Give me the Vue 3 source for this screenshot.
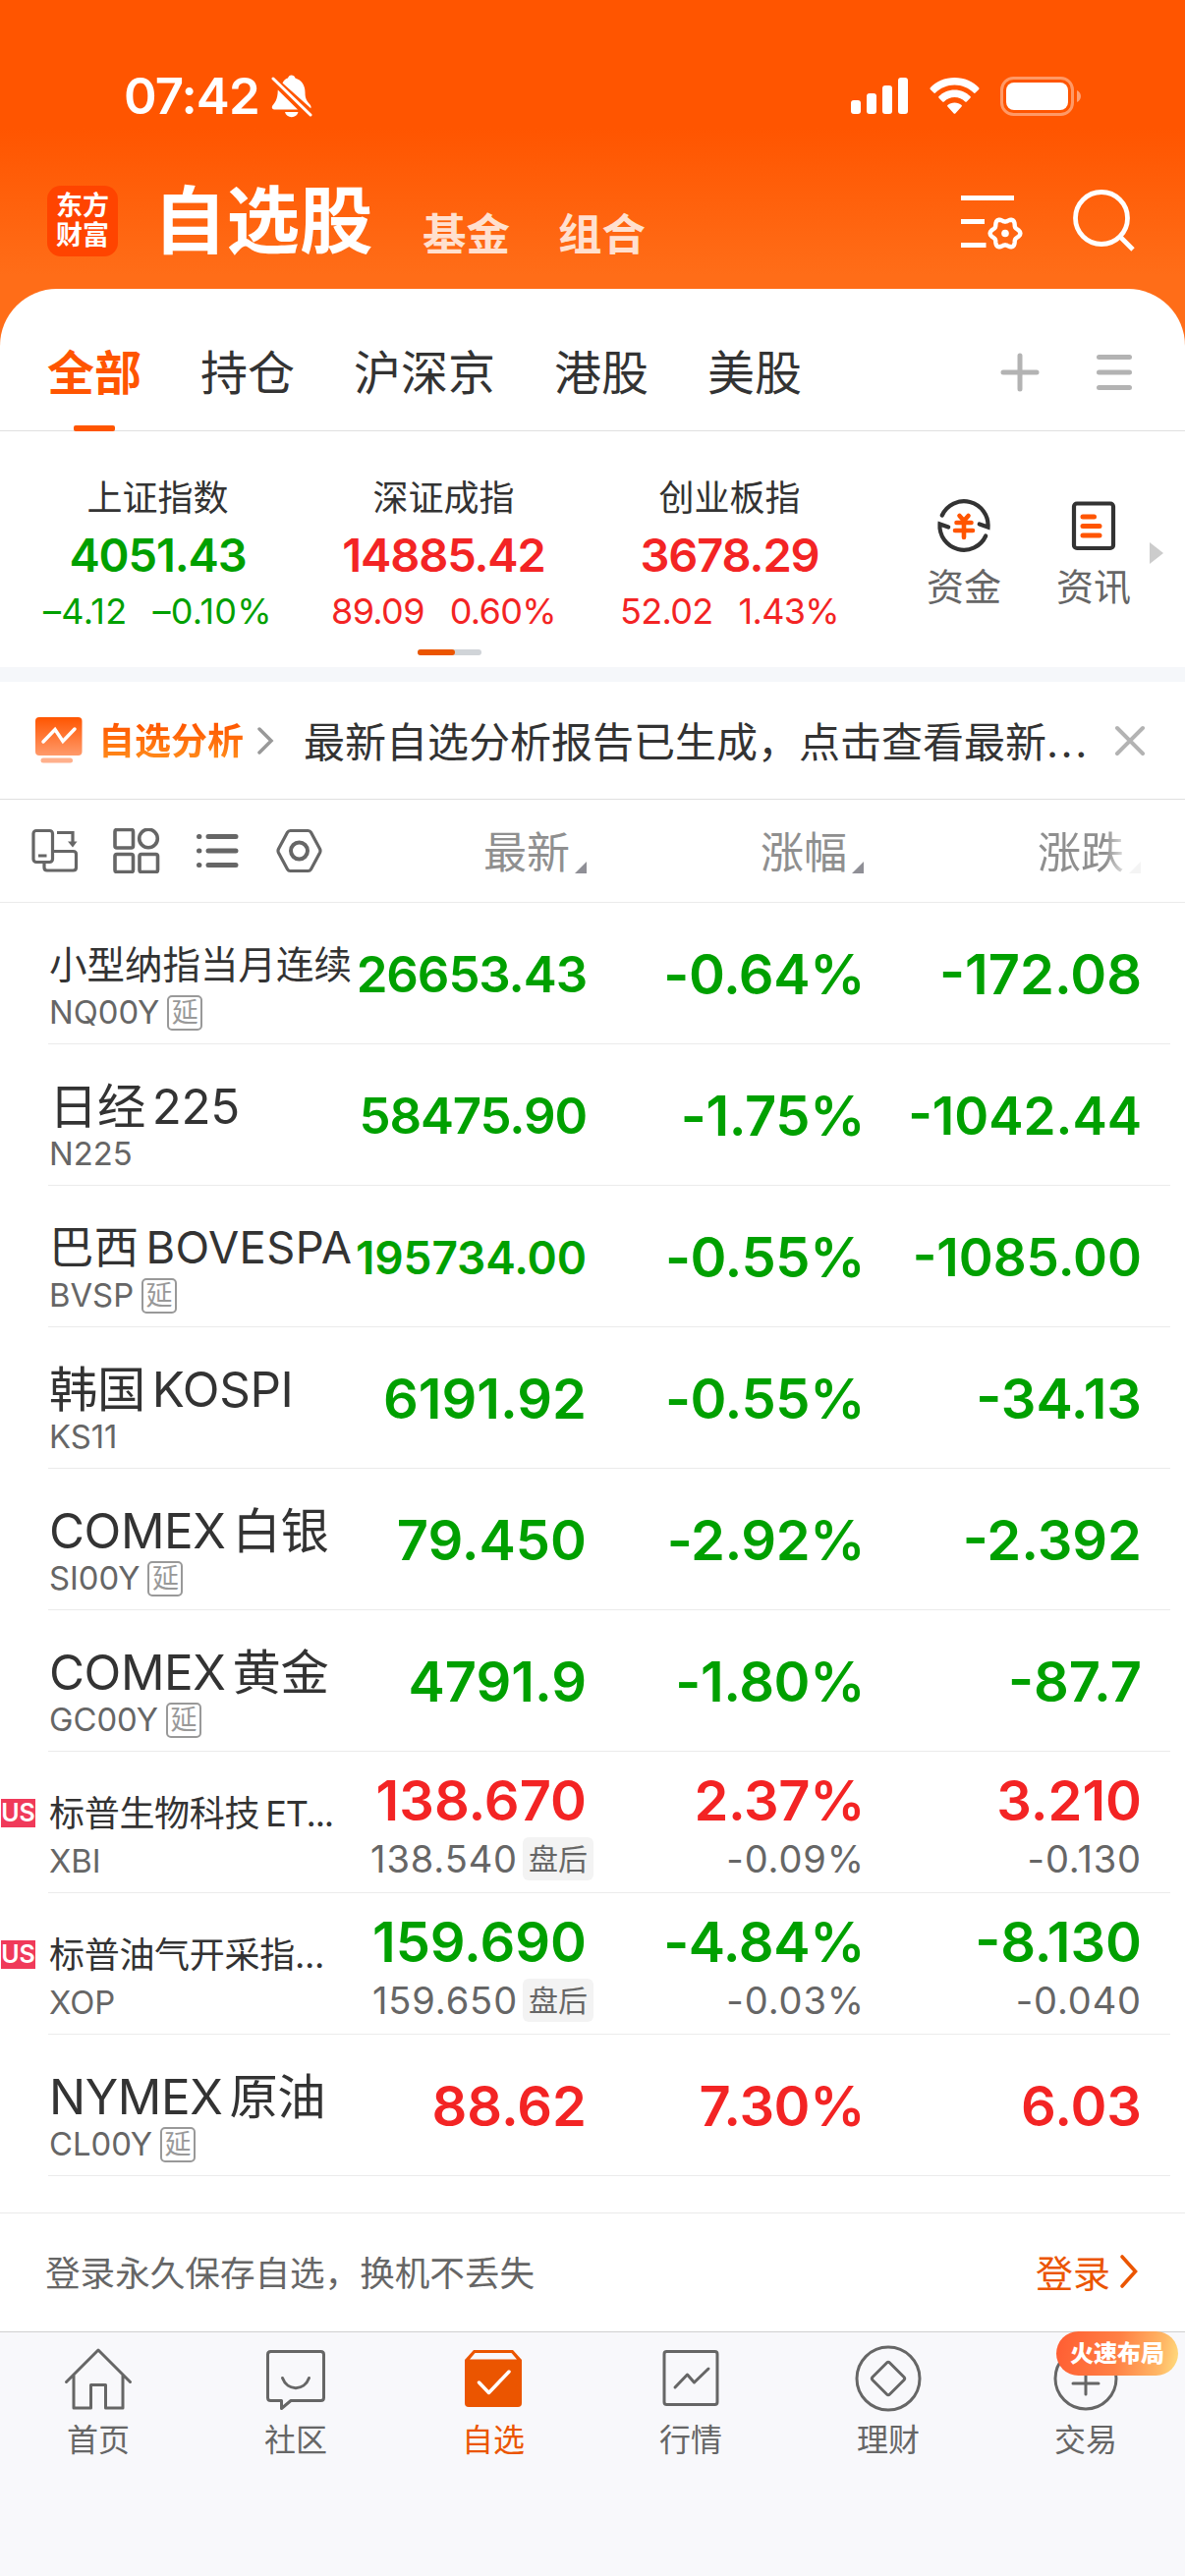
<template>
  <div class="app">
    <header class="header">
      <div class="status-bar">
        <span class="time">07:42</span>
        <svg class="bell" width="42" height="44" viewBox="0 0 42 44">
          <path fill="#fff" d="M11.5 8.5C13 5.500 15 4 17 3.600C17.500 1.600 19 .6 20.500 .6C22.500 .6 24 1.800 24.500 3.600C31 5.500 34.500 11 34.500 18C34.500 25 36.500 27 39.500 30.500C40.600 32 40.800 33 40.300 34.200Z" />
          <path fill="#fff" d="M6.800 15.500L27 35.400H3C.8 35.400 .2 33.500 1.300 31.600C3.500 28.500 6.500 26.500 6.800 15.500Z" />
          <path fill="#fff" d="M14 38h13.500c-.8 3.300-3.300 5.200-6.700 5.200S14.800 41.300 14 38Z" />
          <path stroke="#fff" stroke-width="3" stroke-linecap="round" d="M2 4L40 41" />
        </svg>
        <svg class="signal" width="58" height="38" viewBox="0 0 58 38" fill="#fff">
          <rect x="0" y="23" width="10" height="14" rx="3" />
          <rect x="16" y="16" width="10" height="21" rx="3" />
          <rect x="32" y="8" width="10" height="29" rx="3" />
          <rect x="48" y="0" width="10" height="37" rx="3" />
        </svg>
        <svg class="wifi" width="51" height="38" viewBox="0 0 51 38" fill="#fff">
          <path d="M25.500 0C35.500 0 44.500 3.900 50.200 10.300c.5.6.5 1.200 0 1.700l-3.600 3.600c-.5.5-1.100.5-1.600 0C40 10.500 33 7.500 25.500 7.500S11 10.500 6 15.600c-.5.5-1.100.5-1.600 0L.8 12c-.5-.5-.5-1.100 0-1.700C6.500 3.900 15.500 0 25.500 0Z" />
          <path d="M25.500 12.500c6.300 0 12 2.500 16 6.600.5.500.5 1.100 0 1.600l-3.700 3.700c-.5.5-1.100.5-1.600 0-2.800-2.700-6.500-4.300-10.700-4.300s-7.900 1.600-10.700 4.300c-.5.5-1.100.5-1.600 0L9.500 20.700c-.5-.5-.5-1.100 0-1.600 4-4.100 9.700-6.600 16-6.600Z" />
          <path d="M25.500 25.400c2.800 0 5.300 1 7.100 2.700.5.5.5 1 0 1.500l-6.300 6.800c-.5.5-1.100.5-1.600 0l-6.300-6.800c-.5-.5-.5-1 0-1.500 1.800-1.700 4.300-2.700 7.100-2.700Z" />
        </svg>
        <svg class="battery" width="82" height="40" viewBox="0 0 82 40">
          <rect x="1.500" y="1.500" width="72" height="37" rx="12" fill="none" stroke="#fff" stroke-opacity=".4" stroke-width="3" />
          <rect x="6" y="6" width="63" height="28" rx="8" fill="#fff" />
          <path d="M78 14c2.500 1 4 3.500 4 6s-1.500 5-4 6Z" fill="#fff" fill-opacity=".45" />
        </svg>
      </div>

      <div class="title-bar">
        <div class="logo"><span>东方</span><span>财富</span></div>
        <h1 class="title">自选股</h1>
        <span class="title-link">基金</span>
        <span class="title-link">组合</span>
        <svg class="manage" width="64" height="58" viewBox="0 0 64 58" fill="none" stroke="#fff">
          <path stroke-width="5" d="M0 5.500h54M0 29.500h24M0 53.500h25.500" />
          <path stroke-width="4.400" stroke-linejoin="round" :d="gearPath" />
          <circle cx="45" cy="41.500" r="3.800" fill="#fff" stroke="none" />
        </svg>
        <svg class="search" width="66" height="66" viewBox="0 0 66 66" fill="none" stroke="#fff" stroke-width="4.800">
          <circle cx="30" cy="30" r="26.500" />
          <path d="M48.500 48.500L62 62" />
        </svg>
      </div>
    </header>

    <main class="panel">
      <nav class="group-tabs">
        <span v-for="(tab, i) in groupTabs" :key="tab" class="group-tab" :class="{ active: i === 0 }">{{ tab }}</span>
        <svg class="plus" width="40" height="40" viewBox="0 0 40 40" stroke="#b3b3b3" stroke-width="5" stroke-linecap="round">
          <path d="M20 3v34M3 20h34" />
        </svg>
        <svg class="menu" width="38" height="38" viewBox="0 0 38 38" stroke="#b3b3b3" stroke-width="5" stroke-linecap="round">
          <path d="M3.500 3.500h31M3.500 19h31M3.500 34.500h31" />
        </svg>
      </nav>

      <section class="indices">
        <div v-for="item in indices" :key="item.name" class="index" :class="item.trend">
          <div class="index-name">{{ item.name }}</div>
          <div class="index-value">{{ item.value }}</div>
          <div class="index-change"><span>{{ item.change }}</span><span>{{ item.percent }}</span></div>
        </div>
        <div class="shortcut funds">
          <svg width="56" height="62" viewBox="0 0 56 62" fill="none">
            <g stroke="#333" stroke-width="4.200" stroke-linecap="round">
              <path d="M5.800 20.500A24.500 24.500 0 0 1 52.500 32.500L43.800 29.500" />
              <path d="M50.200 41.500A24.500 24.500 0 0 1 3.500 29.500L12.200 32.500" />
            </g>
            <path stroke="#ff5500" stroke-width="4.600" stroke-linecap="round" stroke-linejoin="round" d="M23.500 21l4.500 5 4.500-5M20.500 28h15M19 36h18M28 27v16" />
          </svg>
          <span>资金</span>
        </div>
        <div class="shortcut">
          <svg width="46" height="62" viewBox="0 0 46 62" fill="none">
            <rect x="3" y="8.500" width="40" height="45.500" rx="3" stroke="#333" stroke-width="4.200" />
            <path stroke="#ff5500" stroke-width="5" stroke-linecap="round" d="M12 22h11.500M12 31.500h17M12 41h17" />
          </svg>
          <span>资讯</span>
        </div>
        <i class="more-arrow"></i>
        <div class="pager"><i></i></div>
      </section>

      <section class="analysis">
        <svg class="analysis-icon" width="50" height="50" viewBox="0 0 50 50" fill="none">
          <defs>
            <linearGradient id="analysisFill" x1="0" y1="0" x2="0" y2="1">
              <stop offset="0" stop-color="#ff5500" />
              <stop offset="1" stop-color="#ff9a6b" />
            </linearGradient>
          </defs>
          <rect x="1" y="1" width="47.500" height="39" rx="4" fill="url(#analysisFill)" />
          <path d="M9 26l12-12.500 8 12L41 13" stroke="#fff" stroke-width="3.500" stroke-linecap="round" />
          <path d="M9 45h27.500" stroke="#ffb08c" stroke-width="5" stroke-linecap="round" />
        </svg>
        <span class="analysis-title">自选分析</span>
        <svg class="analysis-chevron" width="18" height="30" viewBox="0 0 18 30" fill="none" stroke="#999" stroke-width="3.500" stroke-linecap="round">
          <path d="M3 3l12 12L3 27" />
        </svg>
        <span class="analysis-text">最新自选分析报告已生成，点击查看最新<span class="dots">...</span></span>
        <svg class="close" width="32" height="32" viewBox="0 0 32 32" stroke="#b3b3b3" stroke-width="4" stroke-linecap="round">
          <path d="M3 3l26 26M29 3L3 29" />
        </svg>
      </section>

      <section class="table-head">
        <svg class="tool" width="48" height="46" viewBox="0 0 48 46" fill="none" stroke="#666" stroke-width="3.200">
          <rect x="2" y="2.500" width="19.500" height="32" rx="3" />
          <path d="M7 28h8.500M13 34.500v5.500q0 3 3 3h26.500q3 0 3-3V26.500q0-3-3-3H21.500M26 4.500h16v12" />
          <path d="M37 13.500h9.500L42 19.500z" fill="#666" stroke="none" />
        </svg>
        <svg class="tool" width="48" height="46" viewBox="0 0 48 46" fill="none" stroke="#666" stroke-width="3.600">
          <rect x="2" y="1.500" width="18.500" height="18.500" rx="2" />
          <circle cx="36" cy="10.500" r="9.300" />
          <rect x="2" y="26.500" width="18.500" height="18" rx="2" />
          <rect x="27" y="26.500" width="18.500" height="18" rx="2" />
        </svg>
        <svg class="tool" width="48" height="46" viewBox="0 0 48 46" fill="none" stroke="#666" stroke-width="5" stroke-linecap="round">
          <path d="M4.500 8.500h.4M4.500 23h.4M4.500 37.500h.4M14 8.500h28M14 23h28M14 37.500h28" />
        </svg>
        <svg class="tool" width="48" height="46" viewBox="0 0 48 46" fill="none" stroke="#666">
          <path stroke-width="3.200" stroke-linejoin="round" d="M14.500 2.500h18q2 0 3 1.800l9 16.700q1 2 0 4l-9 16.700q-1 1.800-3 1.800h-18q-2 0-3-1.800L2.500 25q-1-2 0-4l9-16.700q1-1.800 3-1.800z" />
          <circle cx="23.500" cy="23" r="8.500" stroke-width="4" />
        </svg>
        <div class="head-cell latest">最新<i></i></div>
        <div class="head-cell percent">涨幅<i></i></div>
        <div class="head-cell change">涨跌<i></i></div>
      </section>

      <ul class="stocks">
        <li v-for="stock in stocks" :key="stock.code" class="stock" :class="[stock.trend, { extended: stock.after }]">
          <div class="market"><span v-if="stock.market">{{ stock.market }}</span></div>
          <div class="info">
            <div class="name" :class="stock.size">
              <span v-for="part in stock.name" :key="part">{{ part }}</span>
            </div>
            <div class="code">{{ stock.code }}<span v-if="stock.delayed" class="delay">延</span></div>
          </div>
          <div class="quote latest">
            <div class="num" :class="stock.priceSize">{{ stock.price }}</div>
            <div v-if="stock.after" class="after">{{ stock.after.price }}<span class="session">盘后</span></div>
          </div>
          <div class="quote percent">
            <div class="num">{{ stock.percent }}</div>
            <div v-if="stock.after" class="after">{{ stock.after.percent }}</div>
          </div>
          <div class="quote change">
            <div class="num" :class="stock.changeSize">{{ stock.change }}</div>
            <div v-if="stock.after" class="after">{{ stock.after.change }}</div>
          </div>
        </li>
      </ul>

      <section class="login">
        <span>登录永久保存自选，换机不丢失</span>
        <a class="login-link">
          登录
          <svg width="20" height="36" viewBox="0 0 20 36" fill="none" stroke="#eb5500" stroke-width="3.600" stroke-linecap="round">
            <path d="M3 3l13.500 15L3 33" />
          </svg>
        </a>
      </section>
    </main>

    <footer class="tab-bar">
      <div class="tab">
        <svg width="70" height="70" viewBox="0 0 70 70">
          <path d="M2.500 36.500L35 4l32.500 32.500M10 29.500V63h17.500V39.500h15V63H60V29.500" />
        </svg>
        <span>首页</span>
      </div>
      <div class="tab">
        <svg width="70" height="70" viewBox="0 0 70 70">
          <path d="M9.500 5.500h51q3 0 3 3v44q0 3-3 3H30L20.500 63.500V55.500H9.500q-3 0-3-3v-44q0-3 3-3z" />
          <path d="M21.500 32.500c5 13.500 22 13.500 27 0" />
        </svg>
        <span>社区</span>
      </div>
      <div class="tab active">
        <svg width="70" height="70" viewBox="0 0 70 70">
          <path class="solid" d="M15 4h40l9 10v44q0 4-4 4H10q-4 0-4-4V14z" />
          <path class="lid" d="M16.500 7h37l5.500 6.500H11z" />
          <path class="check" d="M20.500 37L30.500 47.500 51 26" />
        </svg>
        <span>自选</span>
      </div>
      <div class="tab">
        <svg width="70" height="70" viewBox="0 0 70 70">
          <rect x="8" y="5.500" width="54" height="54" rx="2.500" />
          <path d="M19 42l12.500-13 7 8L53 23" />
        </svg>
        <span>行情</span>
      </div>
      <div class="tab">
        <svg width="70" height="70" viewBox="0 0 70 70">
          <circle cx="35" cy="33" r="32" />
          <path d="M33.500 17q1.500-1.500 3 0l14.500 14.500q1.500 1.500 0 3L36.500 49q-1.500 1.500-3 0L19 34.500q-1.500-1.500 0-3z" />
        </svg>
        <span>理财</span>
      </div>
      <div class="tab">
        <svg width="70" height="70" viewBox="0 0 70 70">
          <circle cx="35" cy="33" r="31" />
          <path d="M22 38h26M35 24v25" />
        </svg>
        <span>交易</span>
        <em class="promo">火速布局</em>
      </div>
    </footer>
  </div>
</template>

<script setup>
const groupTabs = ['全部', '持仓', '沪深京', '港股', '美股']

const indices = [
  { name: '上证指数', value: '4051.43', change: '–4.12', percent: '–0.10%', trend: 'down' },
  { name: '深证成指', value: '14885.42', change: '89.09', percent: '0.60%', trend: 'up' },
  { name: '创业板指', value: '3678.29', change: '52.02', percent: '1.43%', trend: 'up' }
]

const stocks = [
  { name: ['小型纳指当月连续'], size: 'small', code: 'NQ00Y', delayed: true, price: '26653.43', priceSize: 'medium', percent: '-0.64%', change: '-172.08', trend: 'down' },
  { name: ['日经', '225'], code: 'N225', price: '58475.90', priceSize: 'medium', percent: '-1.75%', change: '-1042.44', changeSize: 'wide', trend: 'down' },
  { name: ['巴西', 'BOVESPA'], size: 'medium', code: 'BVSP', delayed: true, price: '195734.00', priceSize: 'small', percent: '-0.55%', change: '-1085.00', changeSize: 'wide', trend: 'down' },
  { name: ['韩国', 'KOSPI'], code: 'KS11', price: '6191.92', percent: '-0.55%', change: '-34.13', trend: 'down' },
  { name: ['COMEX', '白银'], code: 'SI00Y', delayed: true, price: '79.450', percent: '-2.92%', change: '-2.392', trend: 'down' },
  { name: ['COMEX', '黄金'], code: 'GC00Y', delayed: true, price: '4791.9', percent: '-1.80%', change: '-87.7', trend: 'down' },
  {
    name: ['标普生物科技', 'ET...'], size: 'tiny', code: 'XBI', market: 'US', price: '138.670', percent: '2.37%', change: '3.210', trend: 'up',
    after: { price: '138.540', percent: '-0.09%', change: '-0.130' }
  },
  {
    name: ['标普油气开采指...'], size: 'tiny', code: 'XOP', market: 'US', price: '159.690', percent: '-4.84%', change: '-8.130', trend: 'down',
    after: { price: '159.650', percent: '-0.03%', change: '-0.040' }
  },
  { name: ['NYMEX', '原油'], code: 'CL00Y', delayed: true, price: '88.62', percent: '7.30%', change: '6.03', trend: 'up' }
]

// six-lobed gear outline around (45, 41.5)
const points = []
for (let a = 0; a < 360; a += 6) {
  const t = (a * Math.PI) / 180
  const r = 13.6 + 1.8 * Math.cos(6 * t)
  points.push(`${(45 + r * Math.cos(t)).toFixed(2)} ${(41.5 + r * Math.sin(t)).toFixed(2)}`)
}
const gearPath = `M${points.join('L')}Z`
</script>

<style>
body {
  background: #f8f8fb;
}
</style>

<style scoped>
.app {
  width: 1206px;
  height: 2622px;
  display: flex;
  flex-direction: column;
  overflow: hidden;
  font-family: Inter, 'Noto Sans CJK SC', sans-serif;
  color: #333;
  background: linear-gradient(#ff5500 0, #ff5500 130px, #ff6d18 280px, #ff6d18 400px);
}

svg {
  display: block;
  flex: none;
}

.header {
  height: 294px;
  flex: none;
}

.status-bar {
  display: flex;
  align-items: center;
  height: 98px;
  padding: 49px 106px 0 126px;
  margin-bottom: 20px;
}

.time {
  width: 148px;
  color: #fff;
  font-size: 51px;
  font-weight: 600;
  line-height: 98px;
  letter-spacing: -0.9px;
  white-space: nowrap;
}

.bell {
  margin-left: 2px;
}

.signal {
  margin-left: auto;
}

.wifi {
  margin-left: 22px;
}

.battery {
  margin-left: 21px;
}

.title-bar {
  display: flex;
  height: 127px;
  padding: 0 49px 0 48px;
  white-space: nowrap;
}

.logo {
  display: flex;
  flex-direction: column;
  justify-content: center;
  align-items: center;
  width: 72px;
  height: 72px;
  margin-top: 22px;
  border-radius: 14px;
  background: #ff4400;
  color: #fff;
  font-size: 27px;
  font-weight: 700;
  line-height: 30px;
}

.title {
  margin: 0 0 0 36px;
  width: 224px;
  color: #fff;
  font-size: 74.5px;
  font-weight: 700;
  line-height: 116px;
}

.title-link {
  margin-left: 50px;
  width: 88px;
  color: #ffe0cf;
  font-size: 44.5px;
  font-weight: 600;
  line-height: 145px;
}

.manage {
  margin: 29px 0 0 auto;
}

.search {
  margin: 25px 0 0 49px;
}

.panel {
  height: 2079px;
  flex: none;
  background: #fff;
  border-radius: 58px 58px 0 0;
}

.group-tabs {
  display: flex;
  align-items: center;
  height: 144px;
  padding: 0 53px 0 48px;
  gap: 60px;
  border-bottom: 1px solid #e0e0e0;
}

.group-tab {
  position: relative;
  height: 144px;
  font-size: 48px;
  line-height: 171px;
}

.group-tab.active {
  color: #ff5500;
  font-weight: 700;
}

.group-tab.active::after {
  content: '';
  position: absolute;
  left: 27px;
  bottom: -1px;
  width: 42px;
  height: 6px;
  border-radius: 2px;
  background: #ff5500;
}

.plus {
  margin: 26px -3px 0 auto;
}

.menu {
  margin: 26px 0 0;
}

.indices {
  position: relative;
  display: flex;
  height: 240px;
  padding-left: 15px;
}

.index {
  width: 291px;
  padding-top: 42px;
  text-align: center;
  white-space: nowrap;
}

.index-name {
  color: #333;
  font-size: 36px;
  line-height: 52px;
}

.index-value {
  font-size: 47px;
  font-weight: 600;
  line-height: 63px;
  letter-spacing: -1.1px;
}

.index-change {
  display: flex;
  justify-content: center;
  gap: 26px;
  font-size: 36px;
  line-height: 53px;
  letter-spacing: -0.7px;
}

.index.down .index-change {
  letter-spacing: 0.3px;
}

.up {
  color: #f32424;
}

.down {
  color: #00a000;
}

.shortcut {
  display: flex;
  flex-direction: column;
  align-items: center;
  width: 76px;
  padding-top: 65px;
  margin-left: 56px;
  color: #666;
  font-size: 38px;
  line-height: 62px;
}

.funds {
  margin-left: 55px;
}

.more-arrow {
  position: absolute;
  right: 22px;
  top: 113px;
  border-left: 14px solid #ccc;
  border-top: 11px solid transparent;
  border-bottom: 11px solid transparent;
}

.pager {
  position: absolute;
  left: 425px;
  top: 222px;
  width: 65px;
  height: 6px;
  border-radius: 3px;
  background: #d0d4d8;
}

.pager i {
  display: block;
  width: 38px;
  height: 6px;
  border-radius: 3px;
  background: #eb5500;
}

.analysis {
  display: flex;
  align-items: center;
  height: 119px;
  padding: 0 40px 0 35px;
  border-top: 15px solid #f5f7fa;
  border-bottom: 1px solid #e0e0e0;
  white-space: nowrap;
}

.analysis-title {
  margin-left: 15px;
  padding-top: 2px;
  font-size: 37px;
  font-weight: 700;
  line-height: 60px;
  color: transparent;
  background: linear-gradient(#ff5500 20%, #ff8a1a 80%);
  background-clip: text;
}

.analysis-chevron {
  margin-left: 13px;
}

.analysis-text {
  margin-left: 30px;
  padding-top: 4px;
  font-size: 42px;
  line-height: 114px;
}

.dots {
  letter-spacing: 2.5px;
}

.close {
  margin-left: auto;
}

.table-head {
  display: flex;
  align-items: center;
  height: 104px;
  padding-left: 32px;
  border-bottom: 1px solid #ebebeb;
}

.tool {
  margin-right: 35px;
}

.head-cell {
  display: flex;
  justify-content: flex-end;
  height: 104px;
  color: #8f8f8f;
  font-size: 44px;
  line-height: 109px;
  white-space: nowrap;
}

.head-cell i {
  align-self: flex-end;
  margin: 0 0 29px 5px;
  border-left: 12px solid transparent;
  border-bottom: 12px solid #8f8f96;
}

.head-cell.latest {
  width: 233px;
}

.head-cell.percent {
  width: 282px;
}

.head-cell.change {
  width: 282px;
  mask-image: linear-gradient(90deg, #000 246px, rgba(0, 0, 0, 0.1) 270px);
}

.stocks {
  margin: 0;
  padding: 0;
  list-style: none;
}

.stock {
  position: relative;
  display: flex;
  height: 144px;
  white-space: nowrap;
}

.stock::after {
  content: '';
  position: absolute;
  left: 49px;
  right: 15px;
  bottom: 0;
  height: 1px;
  background: #ebebeb;
}

.market {
  width: 50px;
  flex: none;
}

.market span {
  display: block;
  width: 35px;
  height: 29px;
  margin: 48px 0 0 1px;
  background: #f03a5a;
  color: #fff;
  font-size: 25px;
  font-weight: 600;
  line-height: 29px;
  text-align: center;
}

.info {
  width: 312px;
  padding-top: 33px;
  flex: none;
}

.name {
  display: flex;
  gap: 7px;
  color: #333;
  font-size: 49.3px;
  line-height: 60px;
  letter-spacing: -0.4px;
}

.name.medium {
  font-size: 45.3px;
  letter-spacing: 0.4px;
}

.name.small {
  font-size: 38.5px;
  letter-spacing: 0;
}

.name.tiny {
  gap: 6px;
  font-size: 36px;
  letter-spacing: -0.3px;
}

.name.tiny span + span {
  letter-spacing: -1.2px;
}

.code {
  display: flex;
  align-items: center;
  height: 37px;
  gap: 8px;
  color: #666;
  font-size: 32.8px;
  line-height: 37px;
}

.delay {
  width: 32px;
  height: 32px;
  border: 2px solid #999;
  border-radius: 5px;
  color: #999;
  font-size: 27px;
  line-height: 32px;
  text-align: center;
}

.quote {
  display: flex;
  flex-direction: column;
  align-items: flex-end;
  flex: none;
}

.quote.latest {
  width: 235px;
}

.quote.percent {
  width: 283px;
}

.quote.change {
  width: 282px;
}

.num {
  padding-top: 39px;
  height: 68px;
  font-size: 56px;
  font-weight: 600;
  line-height: 68px;
}

.percent .num {
  letter-spacing: -0.4px;
}

.num.medium {
  font-size: 51px;
  letter-spacing: -1.1px;
}

.num.small {
  font-size: 46px;
  letter-spacing: -0.1px;
}

.num.wide {
  font-size: 53px;
}

.extended .num {
  padding-top: 16px;
}

.after {
  display: flex;
  align-items: center;
  height: 50px;
  color: #666;
  font-size: 38px;
  line-height: 50px;
  letter-spacing: 0.9px;
}

.session {
  width: 72px;
  height: 44px;
  margin: 0 -7px 0 5px;
  border-radius: 6px;
  background: #f3f3f3;
  font-size: 30px;
  line-height: 44px;
  letter-spacing: 0;
  text-align: center;
}

.login {
  display: flex;
  align-items: center;
  justify-content: space-between;
  height: 117px;
  margin-top: 37px;
  padding: 0 47px 0 46px;
  border-top: 1px solid #ebebeb;
  color: #666;
  font-size: 35.6px;
}

.login-link {
  display: flex;
  align-items: center;
  gap: 9px;
  color: #eb5500;
  font-size: 38px;
}

.tab-bar {
  display: flex;
  flex: 1;
  border-top: 1px solid #d0d0d0;
  background: #f8f8fb;
}

.tab {
  position: relative;
  display: flex;
  flex-direction: column;
  align-items: center;
  width: 200px;
  padding: 14px 1px 0 0;
  color: #666;
  font-size: 32px;
  line-height: 52px;
}

.tab svg {
  fill: none;
  stroke: #666;
  stroke-width: 3;
  stroke-linejoin: round;
  stroke-linecap: round;
  overflow: visible;
}

.tab.active {
  color: #eb5500;
}

.tab .solid {
  fill: #eb5500;
  stroke: none;
}

.tab .lid {
  fill: #f8f8fb;
  stroke: none;
}

.tab .check {
  stroke: #fff;
  stroke-width: 3.5;
}

.promo {
  position: absolute;
  left: 70px;
  top: -1px;
  width: 124px;
  height: 45px;
  border-radius: 23px;
  background: linear-gradient(100deg, #ff6034 5%, #ff8045 50%, #ffb866 85%, #ffdf80);
  color: #fff;
  font-size: 24px;
  font-style: normal;
  font-weight: 900;
  line-height: 45px;
  text-align: center;
}
</style>
